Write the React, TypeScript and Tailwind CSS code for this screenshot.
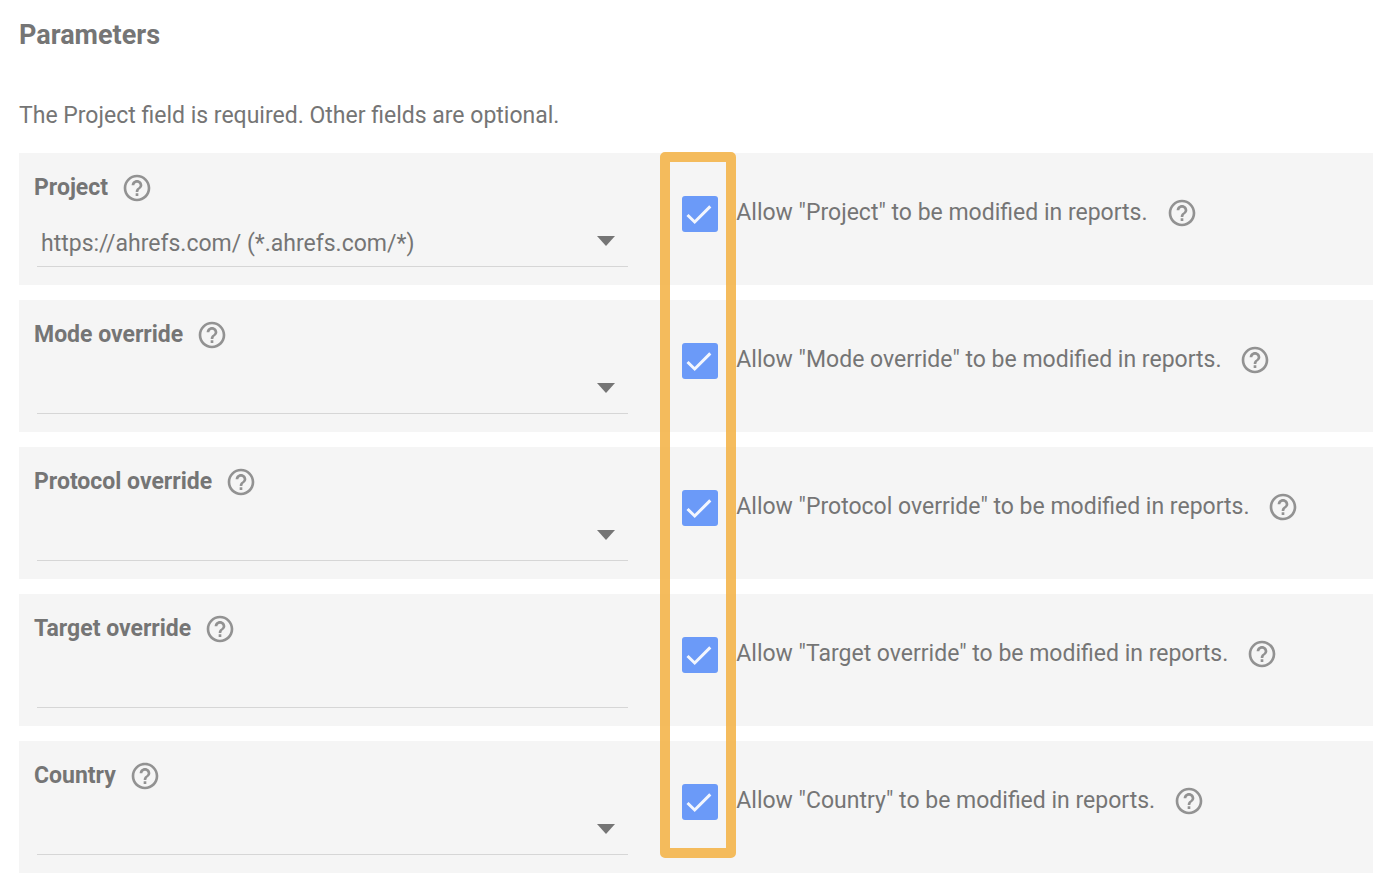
import React from 'react';
import { MdHelpOutline } from 'react-icons/md';

interface Parameter {
  id: string;
  label: string;
  type: 'select' | 'text';
  options?: string[];
}

const parameters: Parameter[] = [
  { id: 'project', label: 'Project', type: 'select', options: ['https://ahrefs.com/ (*.ahrefs.com/*)'] },
  { id: 'mode', label: 'Mode override', type: 'select' },
  { id: 'protocol', label: 'Protocol override', type: 'select' },
  { id: 'target', label: 'Target override', type: 'text' },
  { id: 'country', label: 'Country', type: 'select' }
];

const HelpButton: React.FC<{ topic: string }> = ({ topic }) => (
  <button type="button" aria-label={`Help: ${topic}`} className="shrink-0 text-[#929292]">
    <MdHelpOutline className="size-8" />
  </button>
);

const fieldClass =
  'h-12 w-full appearance-none rounded-none border-b border-[#d6d6d6] bg-transparent pt-[2px] pl-1 text-[23px] leading-8 text-[#757575] outline-none';

const ParameterField: React.FC<{ parameter: Parameter }> = ({ parameter }) => {
  if (parameter.type === 'text') {
    return <input id={parameter.id} type="text" className={fieldClass} />;
  }

  return (
    <div className="grid items-center">
      <select id={parameter.id} className={`${fieldClass} col-start-1 row-start-1 pr-10`}>
        {(parameter.options ?? ['']).map((option) => (
          <option key={option}>{option}</option>
        ))}
      </select>
      <svg viewBox="0 0 18 10" className="pointer-events-none col-start-1 row-start-1 mr-[13px] mb-1 h-[10px] w-[18px] justify-self-end">
        <path d="M0 0h18L9 10z" fill="#757575" />
      </svg>
    </div>
  );
};

const ParameterRow: React.FC<{ parameter: Parameter }> = ({ parameter }) => (
  <div className="flex bg-[#f5f5f5]">
    <div className="w-[45%] shrink-0 pt-[19px] pb-[18px]">
      <div className="mb-[15px] flex h-8 items-center gap-[13px] pl-[15px]">
        <label htmlFor={parameter.id} className="text-[23px] leading-8 font-bold">
          {parameter.label}
        </label>
        <HelpButton topic={parameter.label} />
      </div>
      <div className="pl-[18px]">
        <ParameterField parameter={parameter} />
      </div>
    </div>
    <div className="flex items-center pb-[10px] pl-[54px]">
      <div className="grid shrink-0">
        <input
          id={`${parameter.id}-allow`}
          type="checkbox"
          defaultChecked
          className="peer col-start-1 row-start-1 size-9 appearance-none rounded-[3px] border-2 border-[#757575] checked:border-0 checked:bg-[#6b9af8]"
        />
        <svg viewBox="0 0 36 36" className="pointer-events-none invisible col-start-1 row-start-1 size-9 peer-checked:visible">
          <path d="M5.5 19 12.7 26 28.3 10.4" fill="none" stroke="#f3f6fe" strokeWidth="3" />
        </svg>
      </div>
      <div className="flex items-center gap-[18px] pb-[2px]">
        <label htmlFor={`${parameter.id}-allow`} className="pl-[18px] text-[23px] leading-8">
          Allow "{parameter.label}" to be modified in reports.
        </label>
        <HelpButton topic={`Allow ${parameter.label}`} />
      </div>
    </div>
  </div>
);

const App: React.FC = () => {
  return (
    <main className="bg-white pt-[19px] pr-[17px] pb-2 pl-[19px] font-[Roboto,sans-serif] text-[#757575]">
      <h1 className="text-[27px] leading-8 font-bold">Parameters</h1>
      <p className="mt-[49px] mb-[21px] text-[23px] leading-8">The Project field is required. Other fields are optional.</p>
      <div className="relative flex flex-col gap-[15px]">
        {parameters.map((parameter) => (
          <ParameterRow key={parameter.id} parameter={parameter} />
        ))}
        {/* highlight around the checkbox column */}
        <div className="pointer-events-none absolute -top-px bottom-[15px] left-[45%] ml-8 w-[76px] rounded-[5px] border-[10px] border-[#f3b041]/85" />
      </div>
    </main>
  );
};

export default App;
